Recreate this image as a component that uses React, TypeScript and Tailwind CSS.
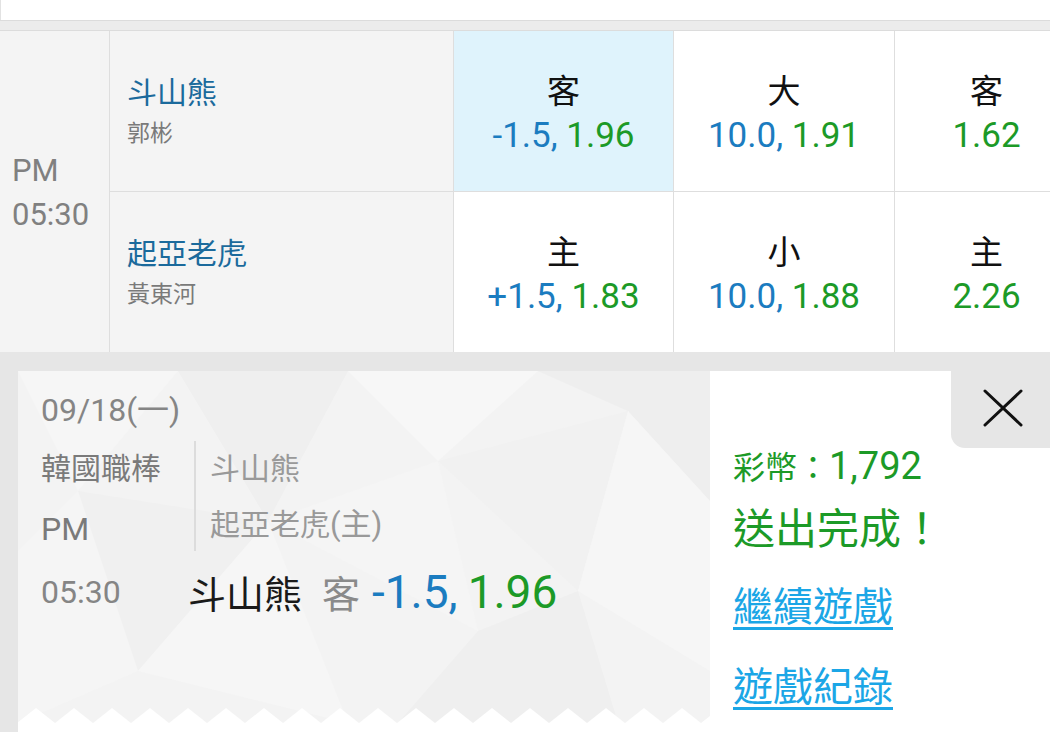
const FONT = "font-['Roboto','Noto_Sans_CJK_TC',sans-serif]";

type Odd = { label: string; line?: string; price: string; active?: boolean };

const rows: { team: string; pitcher: string; odds: Odd[] }[] = [
  {
    team: '斗山熊',
    pitcher: '郭彬',
    odds: [
      { label: '客', line: '-1.5', price: '1.96', active: true },
      { label: '大', line: '10.0', price: '1.91' },
      { label: '客', price: '1.62' },
    ],
  },
  {
    team: '起亞老虎',
    pitcher: '黃東河',
    odds: [
      { label: '主', line: '+1.5', price: '1.83' },
      { label: '小', line: '10.0', price: '1.88' },
      { label: '主', price: '2.26' },
    ],
  },
];

const widths = ['w-[220px]', 'w-[221px]', 'w-[184px]'];

function OddCell({ odd, w }: { odd: Odd; w: string }) {
  return (
    <div
      className={`${w} shrink-0 flex flex-col items-center justify-center border-r border-[#dedede] pt-[6px] ${
        odd.active ? 'bg-[#dff3fc]' : 'bg-white'
      }`}
    >
      <div className="text-[33px] leading-[44px] text-[#111]">{odd.label}</div>
      <div className="text-[35px] leading-[44px] whitespace-nowrap">
        {odd.line && <span className="text-[#1b7cc0]">{odd.line}, </span>}
        <span className="text-[#1c9a27]">{odd.price}</span>
      </div>
    </div>
  );
}

function Pattern() {
  return (
    <svg className="absolute inset-0 w-full h-full" viewBox="0 0 692 352" preserveAspectRatio="none">
      <rect width="692" height="352" fill="#f3f3f3" />
      <polygon points="0,0 160,0 60,120" fill="#f6f6f6" />
      <polygon points="160,0 330,0 250,150" fill="#efefef" />
      <polygon points="330,0 520,0 420,90" fill="#f7f7f7" />
      <polygon points="520,0 692,0 692,130 610,40" fill="#eeeeee" />
      <polygon points="60,120 250,150 120,300" fill="#f0f0f0" />
      <polygon points="250,150 420,90 460,260" fill="#f5f5f5" />
      <polygon points="420,90 610,40 560,220" fill="#f1f1f1" />
      <polygon points="610,40 692,130 692,300 560,220" fill="#f6f6f6" />
      <polygon points="0,180 60,120 120,300 0,352" fill="#f5f5f5" />
      <polygon points="120,300 250,150 330,352" fill="#f6f6f6" />
      <polygon points="460,260 560,220 600,352 380,352" fill="#efefef" />
    </svg>
  );
}

function Zigzag() {
  const tris = [];
  for (let x = -1; x < 700; x += 38) {
    tris.push(<polygon key={x} points={`${x},15 ${x + 19},0 ${x + 38},15`} fill="#ffffff" />);
  }
  return (
    <svg className="absolute left-0 bottom-0 w-[692px] h-[15px]" viewBox="0 0 692 15">
      {tris}
    </svg>
  );
}

export default function App() {
  return (
    <div className={`w-[1050px] h-[732px] overflow-hidden bg-white ${FONT}`}>
      <div className="h-[20px] bg-white border-l border-[#e2e2e2]" />
      <div className="h-[11px] bg-[#ececec] border-y border-[#dcdcdc]" />

      <div className="flex h-[321px]">
        <div className="w-[110px] shrink-0 bg-[#f4f4f4] border-r border-[#dedede] flex flex-col justify-center pl-[12px] pt-[2px] text-[31px] leading-[44px] text-[#808080]">
          <div>PM</div>
          <div>05:30</div>
        </div>
        <div className="flex flex-col">
          {rows.map((r, i) => (
            <div key={r.team} className={`flex ${i === 0 ? 'h-[161px] border-b border-[#dedede]' : 'h-[160px]'}`}>
              <div className="w-[344px] shrink-0 bg-[#f4f4f4] border-r border-[#dedede] flex flex-col justify-center pl-[17px] pt-[4px]">
                <div className="text-[30px] leading-[42px] text-[#1b6a9c]">{r.team}</div>
                <div className="text-[23px] leading-[40px] text-[#7a7a7a]">{r.pitcher}</div>
              </div>
              {r.odds.map((o, j) => (
                <OddCell key={j} odd={o} w={widths[j]} />
              ))}
            </div>
          ))}
        </div>
      </div>

      <div className="h-[380px] bg-[#e6e6e6] pt-[19px] flex">
        <div className="w-[18px] shrink-0" />
        <div className="w-[692px] shrink-0 bg-white">
          <div className="relative h-[352px] overflow-hidden">
            <Pattern />
            <Zigzag />
            <div className="relative pl-[23px] pt-[9px] text-[30px] text-[#858585]">
              <div className="leading-[60px] h-[59px] text-[32px]">09/18(一)</div>
              <div className="flex">
                <div className="w-[153px] shrink-0 leading-[60px] text-[#7a7a7a]">
                  <div>韓國職棒</div>
                  <div className="text-[32px]">PM</div>
                </div>
                <div className="mt-[2px] h-[110px] border-l-2 border-[#dcdcdc] pl-[14px] leading-[56px] text-[#999]">
                  <div>斗山熊</div>
                  <div>
                    起亞老虎<span className="text-[31px]">(主)</span>
                  </div>
                </div>
              </div>
              <div className="flex items-center h-[62px] mt-[2px]">
                <div className="w-[147px] shrink-0 text-[32px]">05:30</div>
                <div className="flex items-baseline whitespace-nowrap">
                  <span className="text-[38px] text-[#1a1a1a]">斗山熊</span>
                  <span className="text-[38px] text-[#8a8a8a] ml-[20px]">客</span>
                  <span className="text-[46px] text-[#1b7cc0] ml-[12px]">-1.5,</span>
                  <span className="text-[46px] text-[#1c9a27] ml-[10px]">1.96</span>
                </div>
              </div>
            </div>
          </div>
        </div>

        <div className="flex-1 bg-white flex flex-col">
          <div className="flex justify-end h-[77px]">
            <div className="w-[99px] h-full bg-[#e6e6e6] rounded-bl-[14px] flex items-center justify-center pl-[4px] pb-[3px]">
              <svg width="40" height="38" viewBox="0 0 40 38" className="text-[#111]">
                <path d="M2 2 L38 36 M38 2 L2 36" stroke="currentColor" strokeWidth="3" strokeLinecap="round" />
              </svg>
            </div>
          </div>
          <div className="pl-[23px]">
            <div className="text-[32px] leading-[36px] text-[#1c9a27] whitespace-nowrap">
              彩幣：<span className="text-[38px]">1,792</span>
            </div>
            <div className="text-[42px] leading-[60px] mt-[14px] text-[#1c9a27]">送出完成！</div>
            <div className="text-[40px] leading-[80px] mt-[8px]">
              <a className="text-[#1ba6e6] underline decoration-[3px] underline-offset-[6px]">繼續遊戲</a>
            </div>
            <div className="text-[40px] leading-[80px]">
              <a className="text-[#1ba6e6] underline decoration-[3px] underline-offset-[6px]">遊戲紀錄</a>
            </div>
          </div>
        </div>
      </div>
    </div>
  );
}
